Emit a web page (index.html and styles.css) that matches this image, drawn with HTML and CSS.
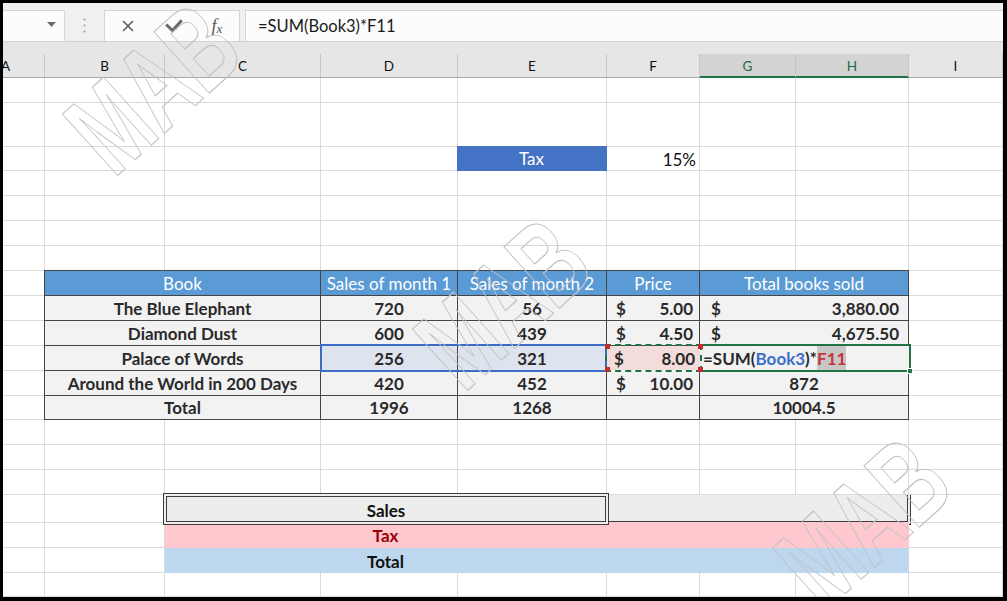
FILE: index.html
```html
<!DOCTYPE html>
<html>
<head>
<meta charset="utf-8">
<title>Sheet</title>
<link rel="stylesheet" href="styles.css">
</head>
<body>
<div class="frame">
  <div class="toolbar">
    <div class="box namebox"><svg width="9" height="5" viewBox="0 0 9 5"><path d="M0 0H9L4.5 5Z" fill="#6b6b6b"/></svg></div>
    <div class="grip"><svg width="3" height="15" viewBox="0 0 3 15"><circle cx="1.5" cy="1.5" r="1.1" fill="#a3a3a3"/><circle cx="1.5" cy="7.5" r="1.1" fill="#a3a3a3"/><circle cx="1.5" cy="13.5" r="1.1" fill="#a3a3a3"/></svg></div>
    <div class="box fxbox">
      <div class="slot"><svg width="12" height="12" viewBox="0 0 12 12"><path d="M1 1L11 11M11 1L1 11" stroke="#575757" stroke-width="1.5" fill="none"/></svg></div>
      <div class="slot"><svg width="18" height="14" viewBox="0 0 18 14"><path d="M1.2 5.5L7.5 11.5L16.8 1.2" fill="none" stroke="#6a6a6a" stroke-width="3"/></svg></div>
      <div class="slot fxs"><span class="fx">f<span class="fxx">x</span></span></div>
    </div>
    <div class="box formula">=SUM(Book3)*F11</div>
  </div>

  <div class="colhead">
    <div class="hrow">
      <div class="ch a"><span>A</span></div>
      <div class="ch">B</div>
      <div class="ch">C</div>
      <div class="ch">D</div>
      <div class="ch">E</div>
      <div class="ch">F</div>
      <div class="ch on">G</div>
      <div class="ch on">H</div>
      <div class="ch">I</div>
    </div>
  </div>

  <div class="sheet">
    <div class="row"><div></div><div></div><div></div><div></div><div></div><div></div><div></div><div></div><div></div></div>
    <div class="row h44"><div></div><div></div><div></div><div></div><div></div><div></div><div></div><div></div><div></div></div>
    <div class="row h24"><div></div><div></div><div></div><div></div><div class="taxh">Tax</div><div class="pct">15%</div><div></div><div></div><div></div></div>
    <div class="row"><div></div><div></div><div></div><div></div><div></div><div></div><div></div><div></div><div></div></div>
    <div class="row"><div></div><div></div><div></div><div></div><div></div><div></div><div></div><div></div><div></div></div>
    <div class="row"><div></div><div></div><div></div><div></div><div></div><div></div><div></div><div></div><div></div></div>
    <div class="row"><div></div><div></div><div></div><div></div><div></div><div></div><div></div><div></div><div></div></div>

    <div class="row">
      <div></div>
      <div class="t th tl s2">Book</div>
      <div class="t th">Sales of month 1</div>
      <div class="t th">Sales of month 2</div>
      <div class="t th">Price</div>
      <div class="t th s2">Total books sold</div>
      <div></div>
    </div>
    <div class="row">
      <div></div>
      <div class="t tl s2">The Blue Elephant</div>
      <div class="t">720</div>
      <div class="t">56</div>
      <div class="t price"><span>$</span><span>5.00</span></div>
      <div class="t money s2"><span>$</span><span>3,880.00</span></div>
      <div></div>
    </div>
    <div class="row">
      <div></div>
      <div class="t tl s2">Diamond Dust</div>
      <div class="t">600</div>
      <div class="t">439</div>
      <div class="t price"><span>$</span><span>4.50</span></div>
      <div class="t money s2"><span>$</span><span>4,675.50</span></div>
      <div></div>
    </div>
    <div class="row">
      <div></div>
      <div class="t tl s2">Palace of Words</div>
      <div class="t hl">256</div>
      <div class="t hl">321</div>
      <div class="t price marq"><span>$</span><span>8.00</span><b class="k k1"></b><b class="k k2"></b><b class="k k3"></b><b class="k k4"></b></div>
      <div class="t edit s2"><span>=SUM(</span><span class="ref1">Book3</span><span>)*</span><span class="ref2">F11</span><b class="grab"></b></div>
      <div></div>
      <div class="sel"></div>
    </div>
    <div class="row">
      <div></div>
      <div class="t tl s2">Around the World in 200 Days</div>
      <div class="t">420</div>
      <div class="t">452</div>
      <div class="t price"><span>$</span><span>10.00</span></div>
      <div class="t s2">872</div>
      <div></div>
    </div>
    <div class="row h24">
      <div></div>
      <div class="t tl s2">Total</div>
      <div class="t">1996</div>
      <div class="t">1268</div>
      <div class="t"></div>
      <div class="t s2">10004.5</div>
      <div></div>
    </div>

    <div class="row"><div></div><div></div><div></div><div></div><div></div><div></div><div></div><div></div><div></div></div>
    <div class="row"><div></div><div></div><div></div><div></div><div></div><div></div><div></div><div></div><div></div></div>
    <div class="row"><div></div><div></div><div></div><div></div><div></div><div></div><div></div><div></div><div></div></div>

    <div class="row h27">
      <div></div><div></div>
      <div class="sales s3">Sales</div>
      <div class="sales2 s3"></div>
      <div></div>
    </div>
    <div class="row h26">
      <div></div><div></div>
      <div class="pink s3 taxt">Tax</div>
      <div class="pink s3"></div>
      <div></div>
    </div>
    <div class="row">
      <div></div><div></div>
      <div class="blue s3 tot">Total</div>
      <div class="blue s3"></div>
      <div></div>
    </div>
    <div class="row h24"><div></div><div></div><div></div><div></div><div></div><div></div><div></div><div></div><div></div></div>
  </div>

  <svg class="wm" width="1007" height="601" viewBox="0 0 1007 601" aria-hidden="true">
    <text transform="translate(153 88) rotate(-42) scale(0.66 1)">MAB</text>
    <text transform="translate(503 303) rotate(-42) scale(0.66 1)">MAB</text>
    <text transform="translate(863 522) rotate(-42) scale(0.66 1)">MAB</text>
  </svg>
</div>
</body>
</html>
```

FILE: styles.css
```css
:root {
  --cols: 42px 120px 156px 137px 149px 93px 96px 113px 94px;
  --grid: #dadada;
  --dark: #454545;
}
* { box-sizing: border-box; margin: 0; padding: 0; }
html, body { width: 1007px; height: 601px; overflow: hidden; background: #fff; }
body { font-family: Lato, "Liberation Sans", sans-serif; color: #222; }

.frame {
  position: relative;
  width: 1007px;
  height: 601px;
  border-style: solid;
  border-color: #000;
  border-width: 3px 4px 4px 3px;
  overflow: hidden;
  display: flex;
  flex-direction: column;
  background: #fff;
}

/* toolbar */
.toolbar {
  flex: none;
  height: 39px;
  display: flex;
  align-items: flex-end;
  background: #f0f0f0;
  border-bottom: 1px solid #d2d2d2;
}
.box {
  height: 31px;
  background: #fcfcfc;
  border: 1px solid #d6d6d6;
  border-bottom: 0;
}
.namebox {
  width: 62px;
  border-left: 0;
  display: flex;
  align-items: center;
  justify-content: flex-end;
  padding: 0 8px 3px 0;
}
.grip {
  width: 39px;
  height: 31px;
  display: flex;
  align-items: center;
  justify-content: center;
}
.fxbox {
  width: 136px;
  display: flex;
  align-items: center;
}
.slot {
  width: 46px;
  display: flex;
  align-items: center;
  justify-content: center;
}
.slot.fxs { width: 40px; }
.fx {
  font-family: "Liberation Serif", serif;
  font-style: italic;
  font-size: 18px;
  color: #555;
}
.fxx { font-size: 13px; position: relative; top: 1px; margin-left: 0; }
.formula {
  flex: 1;
  margin-left: 5px;
  padding-left: 12px;
  display: flex;
  align-items: center;
  font-size: 16.5px;
  color: #1a1a1a;
  border-right: 0;
}

/* column headers */
.colhead {
  flex: none;
  height: 36px;
  background: #e6e6e6;
  border-bottom: 1px solid #a8a8a8;
  padding-top: 12px;
}
.hrow {
  display: grid;
  grid-template-columns: var(--cols);
  height: 23px;
}
.ch {
  border-right: 1px solid #c6c6c6;
  display: flex;
  align-items: center;
  justify-content: center;
  font-size: 13.5px;
  color: #111;
  overflow: hidden;
  padding-top: 1px;
}
.ch.a { justify-content: flex-start; }
.ch.a span { margin-left: -2px; }
.ch.on {
  background: #d3d3d3;
  color: #1f6a42;
  border-bottom: 2px solid #217346;
  margin-bottom: -1px;
}

/* sheet */
.sheet { flex: none; display: flex; flex-direction: column; }
.row {
  flex: none;
  display: grid;
  grid-template-columns: var(--cols);
  height: 25px;
  position: relative;
}
.h44 { height: 44px; }
.h24 { height: 24px; }
.h26 { height: 26px; }
.h27 { height: 27px; }
.row > * {
  border-right: 1px solid var(--grid);
  border-bottom: 1px solid var(--grid);
  display: flex;
  align-items: center;
  justify-content: center;
  font-size: 17px;
  white-space: nowrap;
  min-width: 0;
}
.s2 { grid-column: span 2; }
.s3 { grid-column: span 3; }

.taxh {
  background: #4472c4;
  color: #fff;
  border-color: #4472c4;
  margin: -1px 0 0 -1px;
  padding-top: 1px;
}
.pct { justify-content: flex-end; padding: 1px 3px 0 0; color: #111; }

/* table */
.t {
  background: #f2f2f2;
  border-right: 1px solid var(--dark);
  border-bottom: 1px solid var(--dark);
  font-weight: 700;
  color: #2a2a2a;
}
.tl { border-left: 1px solid var(--dark); margin-left: -1px; }
.th {
  background: #5b9bd5;
  color: #fff;
  font-weight: 400;
  border-top: 1px solid var(--dark);
  margin-top: -1px;
}
.price { justify-content: space-between; padding: 0 6px 0 9px; }
.money { justify-content: space-between; padding: 0 9px 0 11px; }
.hl { background: #dde4ee; }

.marq {
  position: relative;
  z-index: 2;
  background: #f2dcdc;
  background-clip: padding-box;
  border: 2px dashed #1e7145;
  margin: -2px -2px -1px -2px;
  padding: 0 5px 0 7px;
}
.k {
  position: absolute;
  width: 5px;
  height: 5px;
  background: #c52b2b;
}
.k1 { left: -2px; top: -2px; }
.k2 { right: -3px; top: -2px; }
.k3 { left: -2px; bottom: -2px; }
.k4 { right: -3px; bottom: -2px; }

.edit {
  position: relative;
  z-index: 1;
  border: 2px solid #217346;
  border-left: 0;
  margin: -2px -2px -1px 0;
  justify-content: flex-start;
  align-items: stretch;
  padding-left: 3px;
  background: #f2f2f2;
}
.edit span { display: flex; align-items: center; }
.ref1 { color: #3b6fc9; }
.ref2 { color: #c8323c; background: #c7c7c7; }
.grab {
  position: absolute;
  right: -4px;
  bottom: -4px;
  width: 6px;
  height: 6px;
  background: #217346;
  border: 1px solid #fff;
}

.row > .sel {
  position: absolute;
  grid-column: 4 / 6;
  top: -2px;
  bottom: -1px;
  left: -1px;
  right: 0;
  border: 2px solid #3a6cc6;
  z-index: 1;
}

/* bottom block */
.sales {
  position: relative;
  z-index: 1;
  background: #ededed;
  border: 4px double #3d3d3d;
  margin: -2px;
  font-weight: 700;
  color: #111;
  padding-top: 3px;
}
.sales2 {
  background: #ededed;
  border-right: 4px double #3d3d3d;
  border-bottom: 4px double #3d3d3d;
  margin: 0 -2px -2px 0;
}
.pink { background: #ffc7ce; border-color: #ffc7ce; }
.blue { background: #bdd7ee; border-color: #bdd7ee; }
.taxt { color: #9c0006; font-weight: 700; padding-top: 2px; }
.tot { color: #111; font-weight: 700; padding-top: 2px; }

/* watermark */
.wm {
  position: absolute;
  left: -3px;
  top: -3px;
  z-index: 5;
  pointer-events: none;
}
.wm text {
  font-family: "Liberation Sans", sans-serif;
  font-weight: 700;
  font-size: 120px;
  fill: none;
  stroke: #c2c2c2;
  stroke-width: 1;
  stroke-linejoin: round;
  vector-effect: non-scaling-stroke;
  text-anchor: middle;
  dominant-baseline: central;
}
```
